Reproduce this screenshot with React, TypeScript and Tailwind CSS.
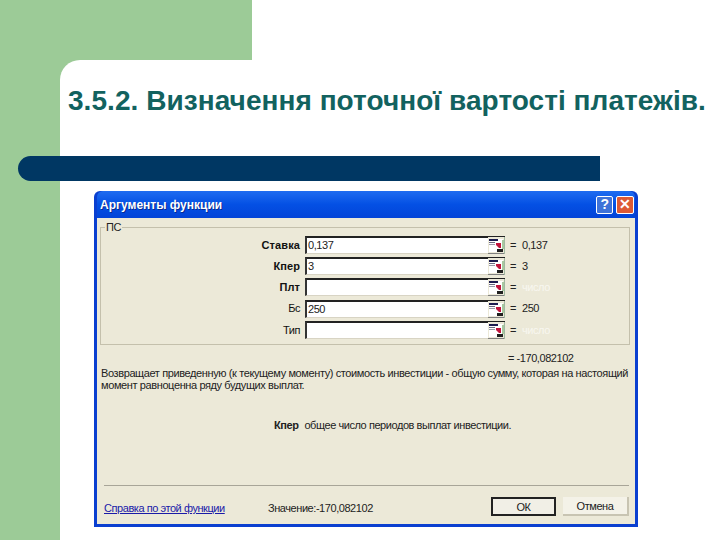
import React from "react";

const dialogFont = "font-['Liberation_Sans',sans-serif]";

const args = [
  { label: "Ставка", bold: true, value: "0,137", result: "0,137", faint: false },
  { label: "Кпер", bold: true, value: "3", result: "3", faint: false },
  { label: "Плт", bold: true, value: "", result: "число", faint: true },
  { label: "Бс", bold: false, value: "250", result: "250", faint: false },
  { label: "Тип", bold: false, value: "", result: "число", faint: true },
];

const RefIcon: React.FC = () => (
  <svg width="17" height="17" viewBox="0 0 17 17" className="shrink-0">
    <rect x="0" y="0" width="17" height="17" fill="#ece9d8" />
    <rect x="1" y="2" width="14" height="13" fill="#ffffff" />
    <rect x="1" y="2" width="9" height="2" fill="#1c1c50" />
    <rect x="1" y="5" width="6" height="1" fill="#6a6a80" />
    <rect x="1" y="7" width="6" height="1" fill="#9a9aa8" />
    <path d="M8 6 L13 6 L13 11 L11 11 L8 8 Z" fill="#c0143c" />
    <rect x="9" y="12" width="6" height="3" fill="#202020" />
    <rect x="14" y="3" width="2" height="9" fill="#a8c8a0" />
    <rect x="0" y="16" width="17" height="1" fill="#808080" />
    <rect x="16" y="0" width="1" height="17" fill="#a0b8a0" />
  </svg>
);

const ArgRow: React.FC<{ row: (typeof args)[number] }> = ({ row }) => (
  <div className="flex items-center h-[18px]">
    <span
      className={`w-[204px] pr-[5px] text-right text-[11px] text-[#111] ${row.bold ? "font-bold tracking-[0.1px]" : ""}`}
    >
      {row.label}
    </span>
    <div className="flex items-center w-[200px] h-[18px] bg-white border-t-2 border-l-2 border-t-[#222] border-l-[#333] border-b border-b-[#d8d4c4]">
      <span className="flex-1 pl-[1px] text-[11px] leading-none text-[#222]">{row.value}</span>
      <RefIcon />
    </div>
    <span className="ml-[5px] text-[11px] text-[#222]">=</span>
    <span className={`ml-[6px] text-[11px] ${row.faint ? "text-[#f8f7f0]" : "text-[#222]"}`}>
      {row.result}
    </span>
  </div>
);

const App: React.FC = () => (
  <div className="flex flex-col w-[720px] h-[540px] overflow-hidden bg-white">
    <div className="w-[252px] h-[60px] shrink-0 bg-[#9ccb97]" />
    <div className="flex flex-1 min-h-0 bg-[#9ccb97]">
      <div className="w-[60px] shrink-0" />
      <main className="flex-1 flex flex-col rounded-tl-[20px] bg-white">
        <h1 className="mt-[22px] ml-[8px] h-[38px] whitespace-nowrap font-['Liberation_Sans',sans-serif] text-[28px] leading-[38px] font-bold tracking-[0.05px] text-[#12625f]">
          3.5.2. Визначення поточної вартості платежів.
        </h1>
        <div className="mt-[36px] -ml-[42px] w-[582px] h-[25px] shrink-0 rounded-l-full bg-[#003763]" />

        <section
          className={`flex flex-col mt-[10px] ml-[34px] w-[544px] h-[336px] rounded-t-[6px] bg-[#0a3fd0] p-[3px] pt-0 tracking-[-0.44px] ${dialogFont}`}
        >
          <header className="flex items-center h-[27px] shrink-0 pl-[3px] pr-[1px] rounded-t-[6px] bg-gradient-to-b from-[#1f6cf0] via-[#0450e4] to-[#0344d8]">
            <span className="flex-1 text-[12px] tracking-normal font-bold text-white [text-shadow:1px_1px_#0a2a90]">
              Аргументы функции
            </span>
            <span className="flex items-center justify-center w-[17px] h-[18px] mr-[3px] rounded-[2px] border border-white bg-[#3f73d8] text-[14px] font-bold text-white">
              ?
            </span>
            <span className="flex items-center justify-center w-[18px] h-[18px] rounded-[2px] border border-white bg-[#dd5a35] text-[14px] font-bold text-white">
              ✕
            </span>
          </header>

          <div className="flex flex-col flex-1 min-h-0 bg-[#ece9d8] text-[#222]">
            <fieldset className="mt-[9px] ml-[3px] w-[530px] h-[118px] shrink-0 border border-[#c4c0ac] pt-[8px]">
              <div className="relative">
                <span className="absolute -top-[15px] left-[4px] bg-[#ece9d8] px-[1px] text-[11px] leading-[13px]">
                  ПС
                </span>
              </div>
              <div className="flex flex-col gap-[3.2px]">
                {args.map((row) => (
                  <ArgRow key={row.label} row={row} />
                ))}
              </div>
            </fieldset>

            <p className="mt-[7px] ml-[411px] h-[13px] text-[11px] leading-[13px]">= -170,082102</p>
            <p className="mt-[2px] ml-[4px] whitespace-nowrap text-[11px] leading-[12px] tracking-[-0.39px]">
              Возвращает приведенную (к текущему моменту) стоимость инвестиции - общую сумму, которая на настоящий
              <br />
              момент равноценна ряду будущих выплат.
            </p>
            <p className="mt-[28px] ml-[177px] text-[11px] leading-[13px]">
              <span className="font-bold">Кпер</span>
              <span className="ml-[6px]">общее число периодов выплат инвестиции.</span>
            </p>
            <div className="mt-[53px] ml-[7px] w-[525px] h-px shrink-0 bg-[#a8a598]" />
            <div className="flex items-center mt-[11px] ml-[7px]">
              <a className="w-[164px] pt-[3px] text-[11px] text-[#1a1aa8] underline">Справка по этой функции</a>
              <span className="w-[223px] pt-[3px] text-[11px]">Значение:-170,082102</span>
              <button className="w-[65px] h-[19px] border-2 border-[#222] bg-[#f1efe6] text-[11px]">ОК</button>
              <button className="ml-[7px] w-[66px] h-[19px] border-r-2 border-b-2 border-[#c8c4b2] bg-[#f4f2e8] text-[11px]">
                Отмена
              </button>
            </div>
          </div>
        </section>
      </main>
    </div>
  </div>
);

export default App;
